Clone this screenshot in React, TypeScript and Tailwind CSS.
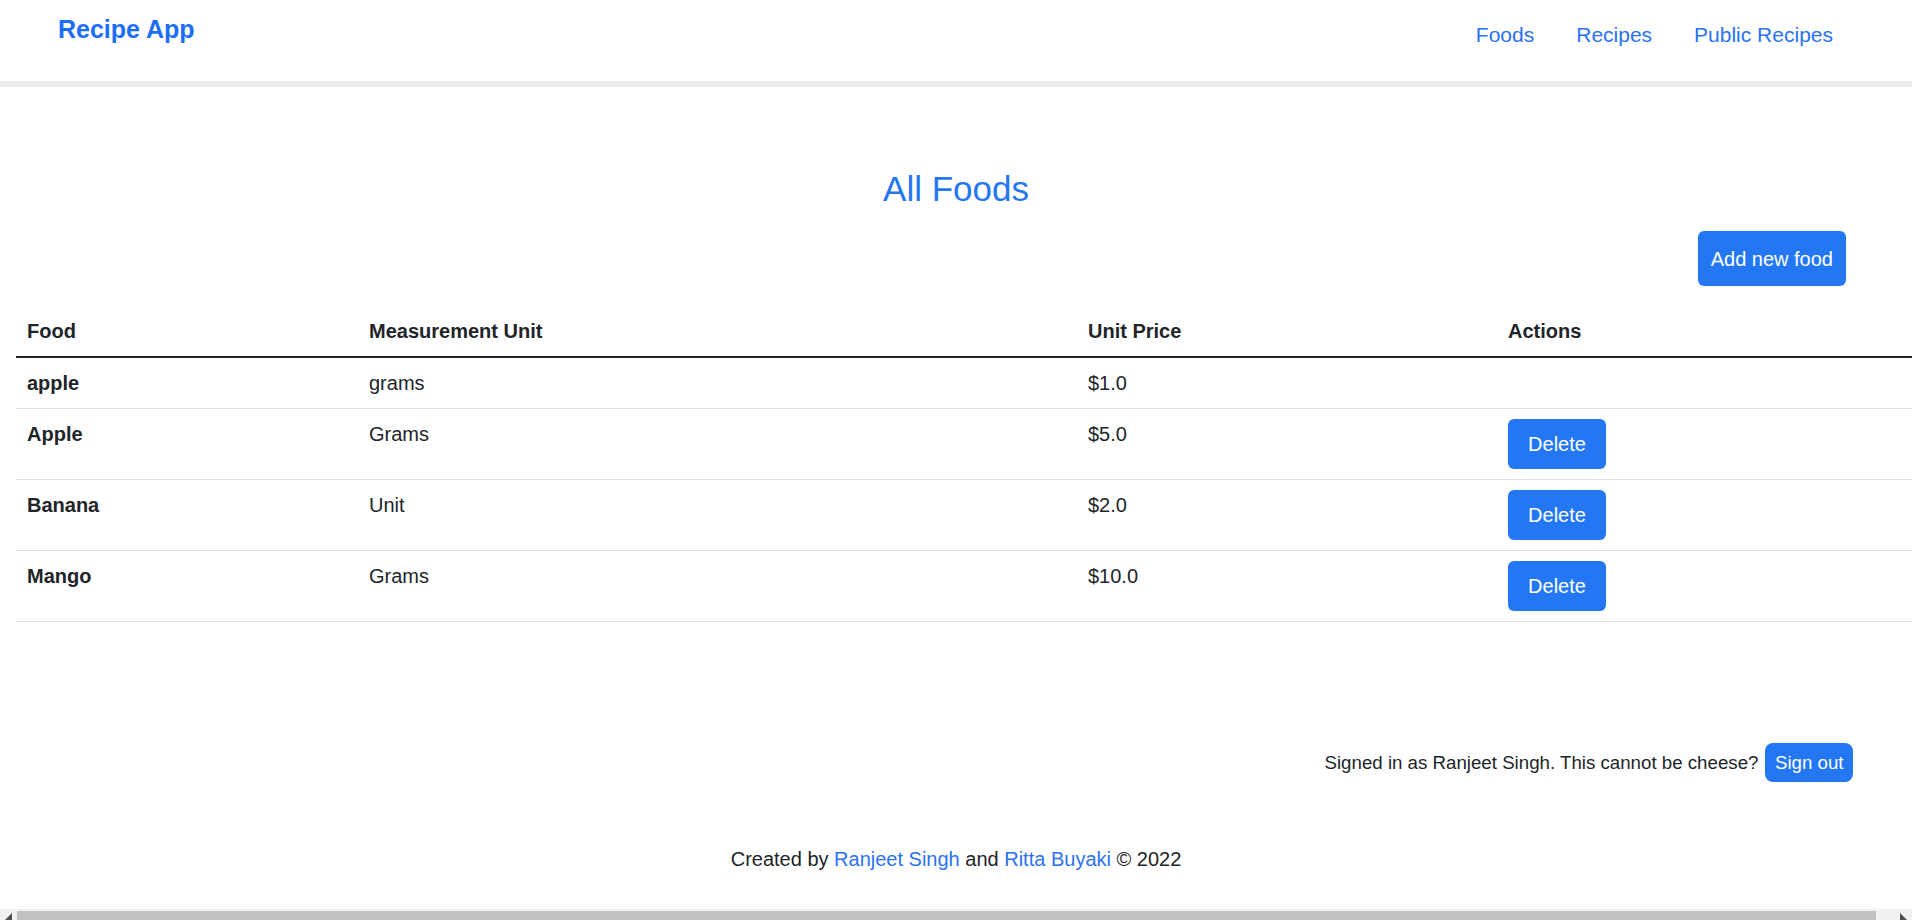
import React from "react";

const foods = [
  { name: "apple", unit: "grams", price: "$1.0", del: false },
  { name: "Apple", unit: "Grams", price: "$5.0", del: true },
  { name: "Banana", unit: "Unit", price: "$2.0", del: true },
  { name: "Mango", unit: "Grams", price: "$10.0", del: true },
];

export default function App() {
  return (
    <div
      className="w-[1912px] h-[920px] overflow-hidden flex flex-col bg-white text-[#212529]"
      style={{ fontFamily: '"Liberation Sans", Arial, sans-serif' }}
    >
      <nav className="h-[87px] shrink-0 flex justify-between border-b-[6px] border-[#ececec] pl-[58px] pr-[79px]">
        <a className="mt-[11px] text-[25px] leading-[36px] font-bold text-[#1a6ef8]">Recipe App</a>
        <div className="mt-[20px] flex gap-[42px] text-[21px] leading-[30px] text-[#2a72f3]">
          <a>Foods</a>
          <a>Recipes</a>
          <a>Public Recipes</a>
        </div>
      </nav>

      <main className="flex flex-col">
        <h1 className="mt-[81px] text-center text-[35px] leading-[42px] text-[#2477f0]">All Foods</h1>
        <div className="mt-[21px] flex justify-end pr-[66px]">
          <button className="h-[55px] px-[13px] rounded-[6px] bg-[#2477f2] text-white text-[20px] leading-[28px]">
            Add new food
          </button>
        </div>
        <div className="mt-[20px] pl-[16px]">
          <table className="w-[1899px] border-collapse table-fixed text-[20px] leading-[30px]">
            <colgroup>
              <col className="w-[342px]" />
              <col className="w-[719px]" />
              <col className="w-[420px]" />
              <col className="w-[418px]" />
            </colgroup>
            <thead>
              <tr className="border-b-2 border-[#212529]">
                <th className="text-left font-bold px-[11px] py-[10px]">Food</th>
                <th className="text-left font-bold px-[11px] py-[10px]">Measurement Unit</th>
                <th className="text-left font-bold px-[11px] py-[10px]">Unit Price</th>
                <th className="text-left font-bold px-[11px] py-[10px]">Actions</th>
              </tr>
            </thead>
            <tbody>
              {foods.map((f) => (
                <tr key={f.name} className="border-b border-[#dee2e6] align-top">
                  <td className="px-[11px] py-[10px] font-bold">{f.name}</td>
                  <td className="px-[11px] py-[10px]">{f.unit}</td>
                  <td className="px-[11px] py-[10px]">{f.price}</td>
                  <td className="px-[11px] py-[10px]">
                    {f.del && (
                      <button className="h-[50px] w-[98px] rounded-[6px] bg-[#2477f2] text-white text-[20px] leading-[28px]">
                        Delete
                      </button>
                    )}
                  </td>
                </tr>
              ))}
            </tbody>
          </table>
        </div>

        <div className="mt-[121px] flex justify-end items-center gap-[7px] pr-[59px] text-[18.7px]">
          <span className="leading-[27px]">Signed in as Ranjeet Singh. This cannot be cheese?</span>
          <button className="h-[39px] px-[9.5px] rounded-[8px] bg-[#2477f2] text-white leading-[27px]">
            Sign out
          </button>
        </div>

        <footer className="mt-[63px] text-center text-[20px] leading-[28px]">
          Created by <a className="text-[#2a72f3]">Ranjeet Singh</a> and{" "}
          <a className="text-[#2a72f3]">Ritta Buyaki</a> © 2022
        </footer>
      </main>

      <div className="flex-1" />
      <div className="h-[11px] shrink-0 bg-[#f1f1f1] flex items-end">
        <div className="w-[17px] h-full flex items-end justify-center">
          <svg width="7" height="7" viewBox="0 0 7 7">
            <polygon points="0,7 7,0 7,7" fill="#505050" />
          </svg>
        </div>
        <div className="w-[1859px] h-[9px] bg-[#c1c1c1]" />
        <div className="flex-1" />
        <div className="w-[17px] h-full flex items-end justify-center">
          <svg width="7" height="7" viewBox="0 0 7 7">
            <polygon points="0,0 7,7 0,7" fill="#505050" />
          </svg>
        </div>
      </div>
    </div>
  );
}
